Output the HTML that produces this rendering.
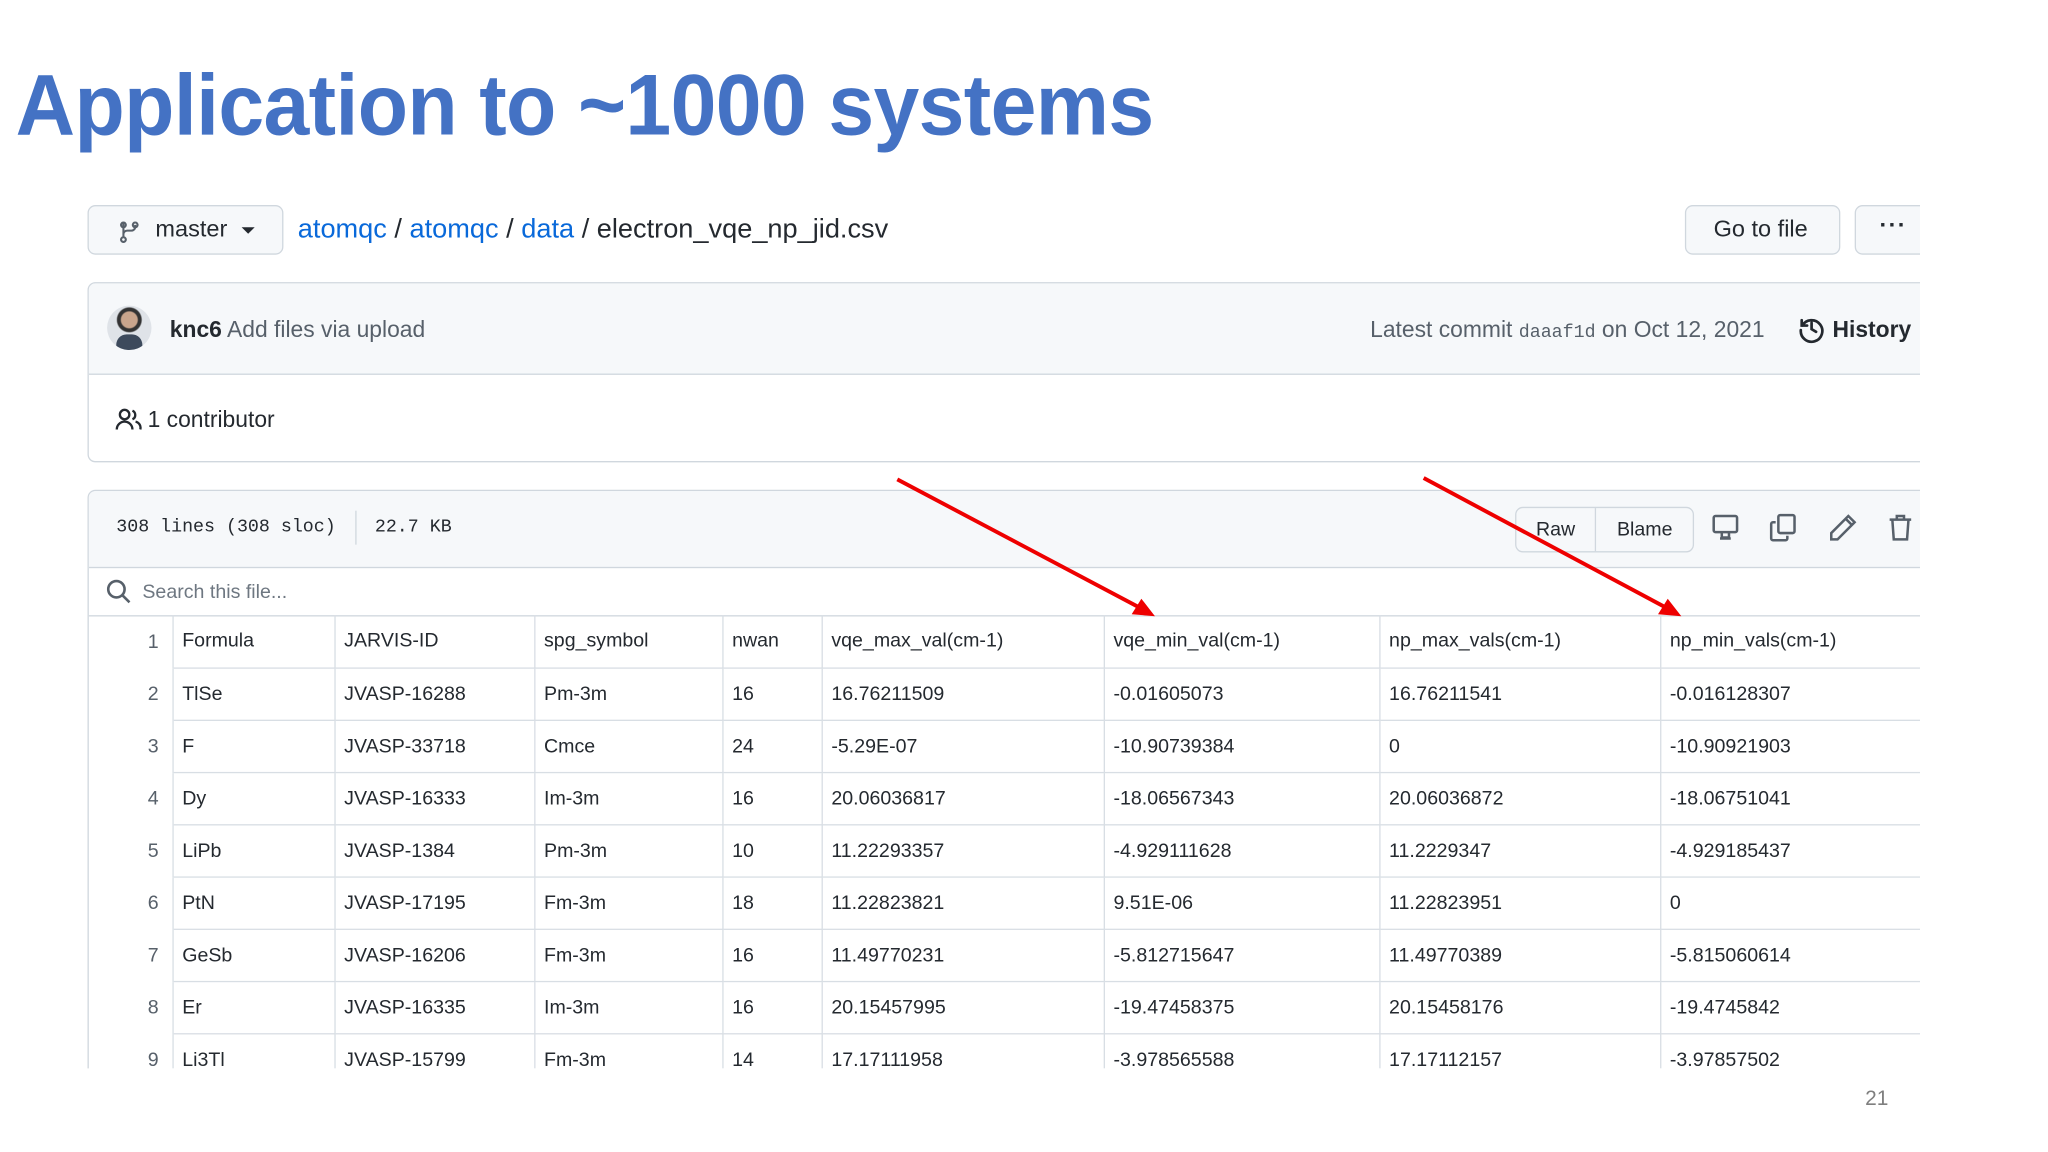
<!DOCTYPE html>
<html><head><meta charset="utf-8"><style>
html,body{margin:0;padding:0;background:#fff;}
body{width:2048px;height:1152px;overflow:hidden;position:relative;}
#s{position:absolute;left:0;top:0;width:1568px;height:882px;transform:scale(1.30612);transform-origin:0 0;font-family:"Liberation Sans",sans-serif;color:#24292f;overflow:hidden;}
.a{position:absolute;white-space:nowrap;}
.btn{position:absolute;background:#f6f8fa;border:1px solid #d0d7de;border-radius:6px;box-sizing:border-box;}
table{border-collapse:collapse;font-size:15px;}
td{height:39px;padding:0 0 0 7px;border:1.5px solid #d8dee4;color:#24292f;box-sizing:border-box;}
td.n{border:none;border-right:1.5px solid #d8dee4;text-align:right;padding:0 10px 0 0;color:#57606a;}
</style></head><body><div id="s">
<div class="a" style="left:12px;top:42px;font-size:66px;font-weight:bold;color:#4472c4;transform:scaleX(0.955);transform-origin:0 0;letter-spacing:-0.5px">Application to ~1000 systems</div>

<div class="btn" style="left:67px;top:157px;width:150px;height:38px"></div>
<svg class="a" style="left:90px;top:166px" width="18" height="20" viewBox="0 0 16 16"><path d="M4 3v10M4 13a1.6 1.6 0 1 0 0.01 0M4 3a1.6 1.6 0 1 0 0.01 0M12 3a1.6 1.6 0 1 0 0.01 0M12 4.6v1.4a2.5 2.5 0 0 1-2.5 2.5H6.5A2.5 2.5 0 0 0 4 11" fill="none" stroke="#57606a" stroke-width="1.4"/></svg>
<div class="a" style="left:119px;top:165px;font-size:18px">master</div>
<div class="a" style="left:185px;top:174px;width:0;height:0;border-left:5px solid transparent;border-right:5px solid transparent;border-top:5px solid #24292f"></div>
<div class="a" style="left:228px;top:164px;font-size:20.8px"><span style="color:#0969da">atomqc</span> / <span style="color:#0969da">atomqc</span> / <span style="color:#0969da">data</span> / electron_vqe_np_jid.csv</div>
<div class="btn" style="left:1290px;top:157px;width:119px;height:38px"></div>
<div class="a" style="left:1312px;top:165px;font-size:18px">Go to file</div>
<div class="btn" style="left:1420px;top:157px;width:60px;height:38px"></div>
<div class="a" style="left:1439px;top:162px;font-size:18px;font-weight:bold;letter-spacing:1px">···</div>

<div class="a" style="left:67px;top:216px;width:1420px;height:138px;border:1px solid #d0d7de;border-radius:6px;box-sizing:border-box;overflow:hidden">
 <div style="height:69px;background:#f6f8fa;border-bottom:1px solid #d0d7de"></div>
</div>
<div class="a" style="left:82px;top:234px;width:34px;height:34px;border-radius:50%;background:radial-gradient(circle at 50% 32%,#c9a58c 0 6px,#333 7px 9px,#dfe3e8 10px);overflow:hidden"><div style="position:absolute;left:7px;top:22px;width:20px;height:14px;border-radius:8px 8px 0 0;background:#3d4a5c"></div></div>
<div class="a" style="left:130px;top:242px;font-size:17.5px"><b style="font-weight:bold">knc6</b> <span style="color:#57606a">Add files via upload</span></div>
<div class="a" style="left:1049px;top:242px;font-size:17.5px;color:#57606a">Latest commit <span style="font-family:'Liberation Mono',monospace;font-size:14px">daaaf1d</span> on Oct 12, 2021</div>
<svg class="a" style="left:1376px;top:241px" width="22" height="22" viewBox="0 0 16 16"><path d="M2.5 3v3h3M2.8 6A6 6 0 1 1 2 8.5M8 4.5V8l2.5 1.5" fill="none" stroke="#24292f" stroke-width="1.5" stroke-linecap="round"/></svg>
<div class="a" style="left:1403px;top:242px;font-size:17.5px;font-weight:bold">History</div>
<svg class="a" style="left:88px;top:312px" width="22" height="18" viewBox="0 0 18 15"><circle cx="6" cy="4.5" r="3" fill="none" stroke="#24292f" stroke-width="1.5"/><path d="M1 14a5 5 0 0 1 10 0M11 2a3 3 0 0 1 0 5.5M13 9a4 4 0 0 1 3 5" fill="none" stroke="#24292f" stroke-width="1.5"/></svg>
<div class="a" style="left:113px;top:311px;font-size:17.5px">1 contributor</div>

<div class="a" style="left:67px;top:375px;width:1420px;height:460px;border:1px solid #d0d7de;border-radius:6px;box-sizing:border-box;overflow:hidden">
 <div style="height:58px;background:#f6f8fa;border-bottom:1px solid #d0d7de"></div>
</div>
<div class="a" style="left:89px;top:396px;font-family:'Liberation Mono',monospace;font-size:14px">308 lines (308 sloc)</div>
<div class="a" style="left:272px;top:391px;width:1px;height:26px;background:#d0d7de"></div>
<div class="a" style="left:287px;top:396px;font-family:'Liberation Mono',monospace;font-size:14px">22.7 KB</div>
<div class="btn" style="left:1160px;top:388px;width:137px;height:35px"></div>
<div class="a" style="left:1221px;top:389px;width:1px;height:33px;background:#d0d7de"></div>
<div class="a" style="left:1176px;top:397px;font-size:15px">Raw</div>
<div class="a" style="left:1238px;top:397px;font-size:15px">Blame</div>
<svg class="a" style="left:1310px;top:393px" width="22" height="22" viewBox="0 0 16 16" fill="none" stroke="#57606a" stroke-width="1.4"><rect x="1.5" y="1.5" width="13" height="9" rx="1"/><path d="M6 10.5v3h4v-3M5 14h6"/></svg>
<svg class="a" style="left:1354px;top:393px" width="22" height="22" viewBox="0 0 16 16" fill="none" stroke="#57606a" stroke-width="1.4"><rect x="5.5" y="1" width="9" height="10" rx="1"/><path d="M4 5H2.5a1 1 0 0 0-1 1v8a1 1 0 0 0 1 1h7a1 1 0 0 0 1-1v-1.5"/></svg>
<svg class="a" style="left:1400px;top:393px" width="22" height="22" viewBox="0 0 16 16" fill="none" stroke="#57606a" stroke-width="1.4"><path d="M11 1.5l3.5 3.5L5 14.5H1.5V11z M9.5 3l3.5 3.5"/></svg>
<svg class="a" style="left:1444px;top:392px" width="22" height="24" viewBox="0 0 16 17" fill="none" stroke="#57606a" stroke-width="1.4"><path d="M2 4h12M6 4V2h4v2M3.5 4l.8 11h7.4l.8-11"/></svg>
<svg class="a" style="left:81px;top:443px" width="20" height="20" viewBox="0 0 16 16" fill="none" stroke="#57606a" stroke-width="1.6"><circle cx="6.5" cy="6.5" r="5"/><path d="M10.2 10.2l4.3 4.3"/></svg>
<div class="a" style="left:109px;top:445px;font-size:15px;color:#6e7781">Search this file...</div>
<div class="a" style="left:68px;top:471px;width:1410px;height:1px;background:#d0d7de"></div>

<div class="a" style="left:68px;top:471px;width:1402px;height:347px;overflow:hidden">
<table style="position:absolute;left:0;top:0;width:1430px;table-layout:fixed">
<colgroup><col style="width:64px"><col style="width:124px"><col style="width:153px"><col style="width:144px"><col style="width:76px"><col style="width:216px"><col style="width:211px"><col style="width:215px"><col style="width:227px"></colgroup>
<tr style="height:40px"><td class="n">1</td><td style="border-top:none">Formula</td><td style="border-top:none">JARVIS-ID</td><td style="border-top:none">spg_symbol</td><td style="border-top:none">nwan</td><td style="border-top:none">vqe_max_val(cm-1)</td><td style="border-top:none">vqe_min_val(cm-1)</td><td style="border-top:none">np_max_vals(cm-1)</td><td style="border-top:none">np_min_vals(cm-1)</td></tr>
<tr style="height:40px"><td class="n">2</td><td>TlSe</td><td>JVASP-16288</td><td>Pm-3m</td><td>16</td><td>16.76211509</td><td>-0.01605073</td><td>16.76211541</td><td>-0.016128307</td></tr>
<tr style="height:40px"><td class="n">3</td><td>F</td><td>JVASP-33718</td><td>Cmce</td><td>24</td><td>-5.29E-07</td><td>-10.90739384</td><td>0</td><td>-10.90921903</td></tr>
<tr style="height:40px"><td class="n">4</td><td>Dy</td><td>JVASP-16333</td><td>Im-3m</td><td>16</td><td>20.06036817</td><td>-18.06567343</td><td>20.06036872</td><td>-18.06751041</td></tr>
<tr style="height:40px"><td class="n">5</td><td>LiPb</td><td>JVASP-1384</td><td>Pm-3m</td><td>10</td><td>11.22293357</td><td>-4.929111628</td><td>11.2229347</td><td>-4.929185437</td></tr>
<tr style="height:40px"><td class="n">6</td><td>PtN</td><td>JVASP-17195</td><td>Fm-3m</td><td>18</td><td>11.22823821</td><td>9.51E-06</td><td>11.22823951</td><td>0</td></tr>
<tr style="height:40px"><td class="n">7</td><td>GeSb</td><td>JVASP-16206</td><td>Fm-3m</td><td>16</td><td>11.49770231</td><td>-5.812715647</td><td>11.49770389</td><td>-5.815060614</td></tr>
<tr style="height:40px"><td class="n">8</td><td>Er</td><td>JVASP-16335</td><td>Im-3m</td><td>16</td><td>20.15457995</td><td>-19.47458375</td><td>20.15458176</td><td>-19.4745842</td></tr>
<tr style="height:40px"><td class="n">9</td><td>Li3Tl</td><td>JVASP-15799</td><td>Fm-3m</td><td>14</td><td>17.17111958</td><td>-3.978565588</td><td>17.17112157</td><td>-3.97857502</td></tr>
</table></div>
<div class="a" style="left:1470px;top:150px;width:98px;height:740px;background:#fff"></div>
<div class="a" style="left:0;top:818px;width:1568px;height:80px;background:#fff"></div>

<svg class="a" style="left:0;top:0" width="1568" height="882"><g stroke="#e00" stroke-width="3" fill="#e00"><line x1="687" y1="367" x2="874" y2="466"/><polygon points="881,470 869,469 874,461" /><line x1="1090" y1="366" x2="1277" y2="466"/><polygon points="1284,470 1272,469 1277,461"/></g></svg>
<div class="a" style="left:1428px;top:833px;font-size:16px;color:#7f7f7f">21</div>
</div></body></html>
